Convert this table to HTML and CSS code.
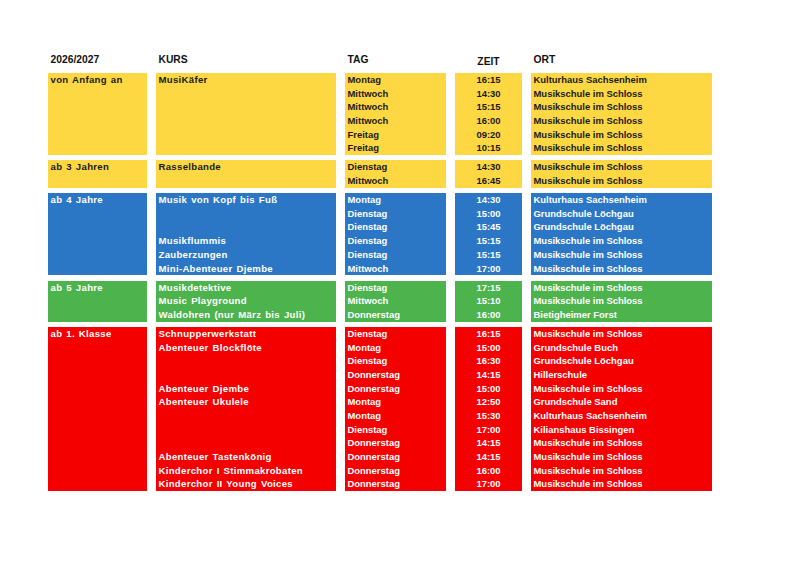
FILE: index.html
```html
<!DOCTYPE html>
<html lang="de">
<head>
<meta charset="utf-8">
<title>Kursplan 2026/2027</title>
<link rel="stylesheet" href="styles.css">
</head>
<body>
<div class="page">
  <div class="head">
    <div class="hcell">2026/2027</div>
    <div class="hcell">KURS</div>
    <div class="hcell">TAG</div>
    <div class="hcell zeit">ZEIT</div>
    <div class="hcell">ORT</div>
  </div>

  <div class="group yellow">
    <div class="box big"><div class="ln">von Anfang an</div></div>
    <div class="box big"><div class="ln">MusiKäfer</div></div>
    <div class="box"><div class="ln">Montag</div><div class="ln">Mittwoch</div><div class="ln">Mittwoch</div><div class="ln">Mittwoch</div><div class="ln">Freitag</div><div class="ln">Freitag</div></div>
    <div class="box time"><div class="ln">16:15</div><div class="ln">14:30</div><div class="ln">15:15</div><div class="ln">16:00</div><div class="ln">09:20</div><div class="ln">10:15</div></div>
    <div class="box"><div class="ln">Kulturhaus Sachsenheim</div><div class="ln">Musikschule im Schloss</div><div class="ln">Musikschule im Schloss</div><div class="ln">Musikschule im Schloss</div><div class="ln">Musikschule im Schloss</div><div class="ln">Musikschule im Schloss</div></div>
  </div>

  <div class="group yellow">
    <div class="box big"><div class="ln">ab 3 Jahren</div></div>
    <div class="box big"><div class="ln">Rasselbande</div></div>
    <div class="box"><div class="ln">Dienstag</div><div class="ln">Mittwoch</div></div>
    <div class="box time"><div class="ln">14:30</div><div class="ln">16:45</div></div>
    <div class="box"><div class="ln">Musikschule im Schloss</div><div class="ln">Musikschule im Schloss</div></div>
  </div>

  <div class="group blue">
    <div class="box big"><div class="ln">ab 4 Jahre</div></div>
    <div class="box big"><div class="ln">Musik von Kopf bis Fuß</div><div class="ln"></div><div class="ln"></div><div class="ln">Musikflummis</div><div class="ln">Zauberzungen</div><div class="ln">Mini-Abenteuer Djembe</div></div>
    <div class="box"><div class="ln">Montag</div><div class="ln">Dienstag</div><div class="ln">Dienstag</div><div class="ln">Dienstag</div><div class="ln">Dienstag</div><div class="ln">Mittwoch</div></div>
    <div class="box time"><div class="ln">14:30</div><div class="ln">15:00</div><div class="ln">15:45</div><div class="ln">15:15</div><div class="ln">15:15</div><div class="ln">17:00</div></div>
    <div class="box"><div class="ln">Kulturhaus Sachsenheim</div><div class="ln">Grundschule Löchgau</div><div class="ln">Grundschule Löchgau</div><div class="ln">Musikschule im Schloss</div><div class="ln">Musikschule im Schloss</div><div class="ln">Musikschule im Schloss</div></div>
  </div>

  <div class="group green">
    <div class="box big"><div class="ln">ab 5 Jahre</div></div>
    <div class="box big"><div class="ln">Musikdetektive</div><div class="ln">Music Playground</div><div class="ln">Waldohren (nur März bis Juli)</div></div>
    <div class="box"><div class="ln">Dienstag</div><div class="ln">Mittwoch</div><div class="ln">Donnerstag</div></div>
    <div class="box time"><div class="ln">17:15</div><div class="ln">15:10</div><div class="ln">16:00</div></div>
    <div class="box"><div class="ln">Musikschule im Schloss</div><div class="ln">Musikschule im Schloss</div><div class="ln">Bietigheimer Forst</div></div>
  </div>

  <div class="group red">
    <div class="box big"><div class="ln">ab 1. Klasse</div></div>
    <div class="box big"><div class="ln">Schnupperwerkstatt</div><div class="ln">Abenteuer Blockflöte</div><div class="ln"></div><div class="ln"></div><div class="ln">Abenteuer Djembe</div><div class="ln">Abenteuer Ukulele</div><div class="ln"></div><div class="ln"></div><div class="ln"></div><div class="ln">Abenteuer Tastenkönig</div><div class="ln">Kinderchor I Stimmakrobaten</div><div class="ln">Kinderchor II Young Voices</div></div>
    <div class="box"><div class="ln">Dienstag</div><div class="ln">Montag</div><div class="ln">Dienstag</div><div class="ln">Donnerstag</div><div class="ln">Donnerstag</div><div class="ln">Montag</div><div class="ln">Montag</div><div class="ln">Dienstag</div><div class="ln">Donnerstag</div><div class="ln">Donnerstag</div><div class="ln">Donnerstag</div><div class="ln">Donnerstag</div></div>
    <div class="box time"><div class="ln">16:15</div><div class="ln">15:00</div><div class="ln">16:30</div><div class="ln">14:15</div><div class="ln">15:00</div><div class="ln">12:50</div><div class="ln">15:30</div><div class="ln">17:00</div><div class="ln">14:15</div><div class="ln">14:15</div><div class="ln">16:00</div><div class="ln">17:00</div></div>
    <div class="box"><div class="ln">Musikschule im Schloss</div><div class="ln">Grundschule Buch</div><div class="ln">Grundschule Löchgau</div><div class="ln">Hillerschule</div><div class="ln">Musikschule im Schloss</div><div class="ln">Grundschule Sand</div><div class="ln">Kulturhaus Sachsenheim</div><div class="ln">Kilianshaus Bissingen</div><div class="ln">Musikschule im Schloss</div><div class="ln">Musikschule im Schloss</div><div class="ln">Musikschule im Schloss</div><div class="ln">Musikschule im Schloss</div></div>
  </div>
</div>
</body>
</html>
```

FILE: styles.css
```css
html, body {
  margin: 0;
  padding: 0;
  background: #ffffff;
}

body {
  font-family: "Liberation Sans", Arial, sans-serif;
  font-weight: bold;
  color: #1a1a1a;
}

.page {
  width: 800px;
  height: 565px;
  padding: 53px 0 0 48px;
  box-sizing: border-box;
  display: flex;
  flex-direction: column;
  gap: 5.4px;
}

.head,
.group {
  display: grid;
  grid-template-columns: 99px 180px 101px 67px 181px;
  column-gap: 9px;
}

.head {
  height: 14.6px;
  font-size: 10.3px;
  line-height: 14px;
  color: #111111;
}

.hcell {
  padding-left: 2.5px;
}

.hcell.zeit {
  padding-left: 0;
  padding-top: 1.5px;
  text-align: center;
}

.box {
  display: flex;
  flex-direction: column;
  font-size: 9.45px;
}

.box.big {
  font-size: 9.6px;
  letter-spacing: 0.3px;
  word-spacing: 1px;
}

.ln {
  height: 13.68px;
  line-height: 13.68px;
  padding-left: 2.5px;
  white-space: nowrap;
}

.time .ln {
  padding-left: 0;
  text-align: center;
}

.yellow .box {
  background: #fdd843;
  color: #1a1a1a;
}

.blue .box {
  background: #2b77c6;
  color: #ffffff;
}

.green .box {
  background: #4cb34d;
  color: #ffffff;
}

.red .box {
  background: #f50000;
  color: #ffffff;
}
```
